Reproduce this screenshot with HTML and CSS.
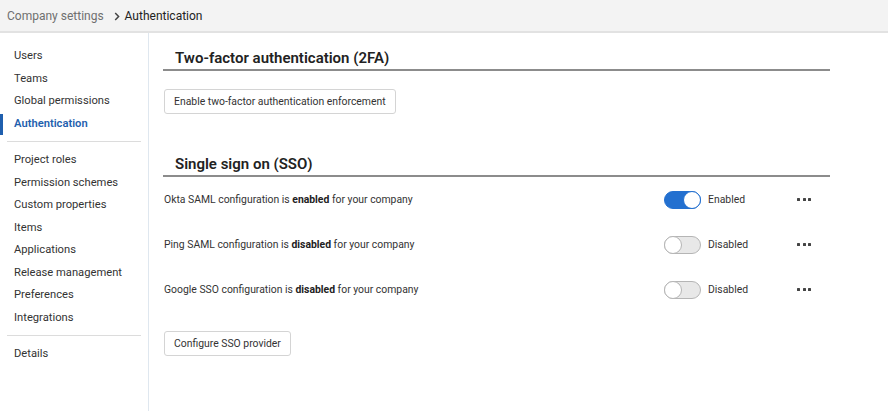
FILE: index.html
```html
<!DOCTYPE html>
<html>
<head>
<meta charset="utf-8">
<link rel="stylesheet" href="styles.css">
</head>
<body>
<header class="topbar">
  <span class="crumb">Company settings</span>
  <svg class="chev" width="6" height="9" viewBox="0 0 6 9"><path d="M1.2 1 L4.6 4.5 L1.2 8" fill="none" stroke="#444" stroke-width="1.5"/></svg>
  <span class="crumb-current">Authentication</span>
</header>
<div class="layout">
  <nav class="sidebar">
    <ul class="nav-group">
      <li>Users</li>
      <li>Teams</li>
      <li>Global permissions</li>
      <li class="active">Authentication</li>
    </ul>
    <ul class="nav-group">
      <li>Project roles</li>
      <li>Permission schemes</li>
      <li>Custom properties</li>
      <li>Items</li>
      <li>Applications</li>
      <li>Release management</li>
      <li>Preferences</li>
      <li>Integrations</li>
    </ul>
    <ul class="nav-group">
      <li>Details</li>
    </ul>
  </nav>
  <main class="content">
    <section class="section">
      <h2 class="section-title">Two-factor authentication (2FA)</h2>
      <button class="btn">Enable two-factor authentication enforcement</button>
    </section>
    <section class="section sso">
      <h2 class="section-title">Single sign on (SSO)</h2>
      <div class="sso-list">
        <div class="sso-row">
          <span class="sso-text">Okta SAML configuration is <b>enabled</b> for your company</span>
          <span class="toggle on"><span class="knob"></span></span>
          <span class="toggle-label">Enabled</span>
          <span class="dots"><i></i><i></i><i></i></span>
        </div>
        <div class="sso-row">
          <span class="sso-text">Ping SAML configuration is <b>disabled</b> for your company</span>
          <span class="toggle"><span class="knob"></span></span>
          <span class="toggle-label">Disabled</span>
          <span class="dots"><i></i><i></i><i></i></span>
        </div>
        <div class="sso-row">
          <span class="sso-text">Google SSO configuration is <b>disabled</b> for your company</span>
          <span class="toggle"><span class="knob"></span></span>
          <span class="toggle-label">Disabled</span>
          <span class="dots"><i></i><i></i><i></i></span>
        </div>
      </div>
      <button class="btn btn-config">Configure SSO provider</button>
    </section>
  </main>
</div>
</body>
</html>
```
FILE: styles.css
```css
* { box-sizing: border-box; }
html, body { margin: 0; padding: 0; height: 100%; }
body {
  font-family: Roboto, "Noto Sans", sans-serif;
  color: #333;
  background: #fff;
  display: flex;
  flex-direction: column;
}
.topbar {
  height: 33px;
  flex: none;
  background: #f3f3f3;
  border-bottom: 2px solid #e2e2e2;
  display: flex;
  align-items: center;
  padding-left: 7px;
  font-size: 12px;
}
.crumb { color: #6f6f6f; }
.chev { margin: 1px 5px 0 10px; }
.crumb-current { color: #222; }
.layout { flex: 1; display: flex; min-height: 0; }
.sidebar {
  width: 149px;
  flex: none;
  border-right: 1px solid #dfe7ef;
  padding: 12px 7px 0 0;
}
.nav-group {
  list-style: none;
  margin: 0 0 0 7px;
  padding: 0 0 6px;
  border-bottom: 1px solid #dcdcdc;
}
.nav-group + .nav-group { padding-top: 7px; }
.nav-group:last-child { border-bottom: none; }
.nav-group li {
  font-size: 11.2px;
  color: #333;
  height: 22.5px;
  line-height: 22.5px;
  padding-left: 7px;
  position: relative;
}
.nav-group li.active { color: #1f5fae; font-weight: 600; }
.nav-group li.active::before {
  content: "";
  position: absolute;
  left: -7px;
  top: 1px;
  bottom: 0;
  width: 3px;
  background: #1f5fae;
}
.content { flex: 1; padding: 16px 0 0 14px; }
.section { width: 667px; }
.section-title {
  margin: 0;
  font-size: 15px;
  font-weight: 600;
  color: #222;
  padding: 0 0 2px 12px;
  border-bottom: 2px solid #8c8c8c;
  line-height: 18px;
}
.btn {
  font-family: inherit;
  font-size: 10.4px;
  color: #333;
  background: #fff;
  border: 1px solid #d4d4d4;
  border-radius: 3px;
  height: 25px;
  padding: 0 9px;
  margin: 18px 0 0 1px;
  display: block;
}
.sso { margin-top: 41px; }
.sso-row {
  display: flex;
  align-items: center;
  height: 45px;
  font-size: 10.4px;
  color: #333;
  padding-left: 1px;
}
.sso-text { flex: 1; }
.sso-text b { font-weight: 700; color: #222; }
.toggle {
  width: 37px;
  height: 18px;
  border-radius: 9px;
  background: #e8e8e8;
  border: 1px solid #b5b5b5;
  position: relative;
  flex: none;
}
.toggle .knob {
  position: absolute;
  top: -1px;
  left: -1px;
  width: 18px;
  height: 18px;
  border-radius: 50%;
  background: #fff;
  border: 1px solid #b5b5b5;
}
.toggle.on { background: #2370d0; border-color: #2370d0; }
.toggle.on .knob { left: auto; right: -1px; border-color: #2370d0; }
.toggle-label { width: 96px; padding-left: 7px; }
.dots { width: 33px; display: flex; gap: 2.5px; }
.dots i { width: 3px; height: 3px; background: #444; display: block; border-radius: 0.5px; }
.btn-config { margin-top: 19px; }
```
